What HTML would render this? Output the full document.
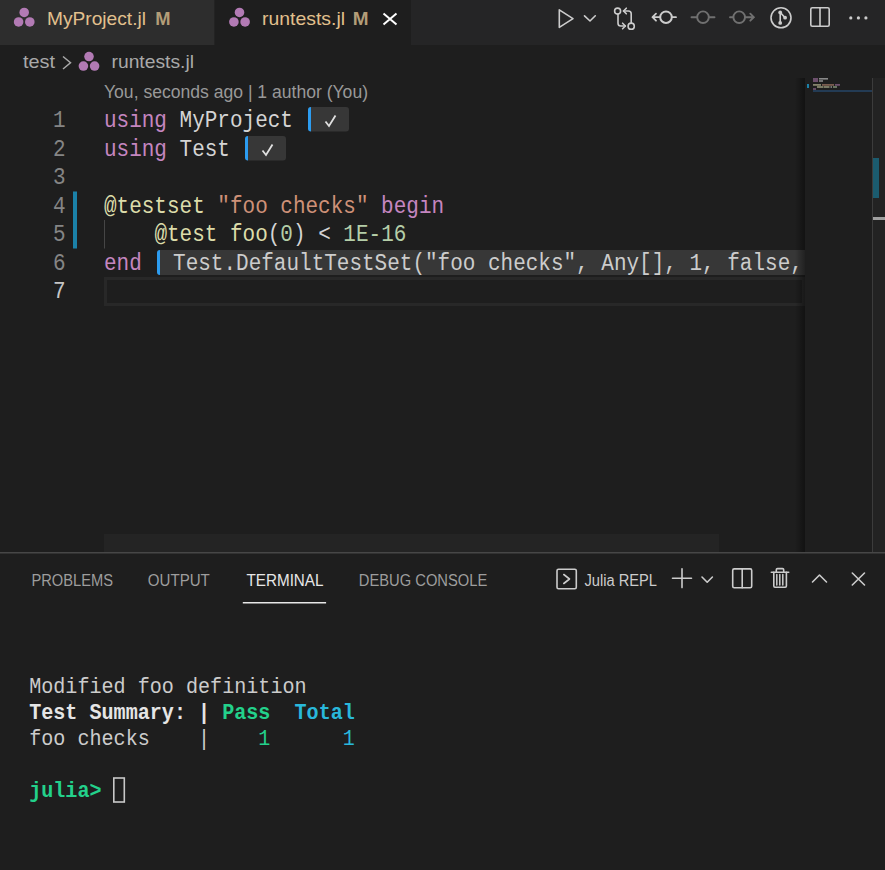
<!DOCTYPE html>
<html><head><meta charset="utf-8">
<style>
html,body{margin:0;padding:0;background:#1e1e1e;width:885px;height:870px;overflow:hidden}
svg{display:block}
.ui{font-family:"Liberation Sans",sans-serif}
.mono{font-family:"Liberation Mono",monospace}
</style></head><body>
<svg width="885" height="870" viewBox="0 0 885 870">
<defs>
  <g id="jl">
    <circle cx="0" cy="-4.75" r="4.8" fill="#b27ab4"/>
    <circle cx="-5.6" cy="4.75" r="4.8" fill="#b27ab4"/>
    <circle cx="5.6" cy="4.75" r="4.8" fill="#b27ab4"/>
  </g>
  <linearGradient id="mmshadow" x1="0" x2="1" y1="0" y2="0">
    <stop offset="0" stop-color="#000" stop-opacity="0"/>
    <stop offset="1" stop-color="#000" stop-opacity="0.4"/>
  </linearGradient>
</defs>
<rect x="0" y="0" width="885" height="870" fill="#1e1e1e"/>


<rect x="0" y="0" width="885" height="45" fill="#252526"/>
<rect x="0" y="0" width="214.5" height="45" fill="#2d2d2d"/>
<rect x="214.5" y="0" width="196.5" height="45" fill="#1e1e1e"/>
<use href="#jl" x="24.2" y="17.2"/>
<text class="ui" x="47" y="25.3" font-size="19" fill="#e2c08d" textLength="99" lengthAdjust="spacingAndGlyphs">MyProject.jl</text>
<text class="ui" x="155.3" y="25.3" font-size="18.5" font-weight="700" fill="#b39d78" textLength="15.3" lengthAdjust="spacingAndGlyphs">M</text>
<use href="#jl" x="239.5" y="17.2"/>
<text class="ui" x="262" y="25.3" font-size="19" fill="#e2c08d" textLength="83" lengthAdjust="spacingAndGlyphs">runtests.jl</text>
<text class="ui" x="352.8" y="25.3" font-size="18.5" font-weight="700" fill="#b39d78" textLength="15.8" lengthAdjust="spacingAndGlyphs">M</text>
<path d="M383.5 13.5 L396.5 24.5 M396.5 13.5 L383.5 24.5" stroke="#ffffff" stroke-width="2" fill="none"/>


<g fill="none" stroke="#cccccc" stroke-width="1.6" stroke-linejoin="round" stroke-linecap="round">
  <path d="M559.3 9.8 L573 18.6 L559.3 27.4 Z"/>
  <path d="M584.5 15.8 L590 21 L595.3 15.8"/>
  <circle cx="617.6" cy="11.1" r="3"/>
  <circle cx="631.2" cy="26.2" r="3.1"/>
  <path d="M618 14.1 V23.2 a2.8 2.8 0 0 0 2.8 2.8 H625.3"/>
  <path d="M622.6 23.2 L625.4 26 L622.6 28.8"/>
  <path d="M631.2 23.1 V13.8 a2.8 2.8 0 0 0 -2.8 -2.8 H623.5"/>
  <path d="M626.3 8.2 L623.5 11 L626.3 13.8"/>
  <circle cx="666" cy="17.2" r="5.8" stroke-width="2"/>
  <path d="M671.8 17.2 H676 M660.2 17.2 H652.5 M656 13.7 L652.5 17.2 L656 20.7" stroke-width="1.8"/>
</g>
<g fill="none" stroke="#707070" stroke-width="1.9" stroke-linecap="round">
  <circle cx="703" cy="17.2" r="5.8"/>
  <path d="M691.5 17.2 H697 M709 17.2 H714.5"/>
  <circle cx="739.2" cy="17.2" r="5.8"/>
  <path d="M730 17.2 H733.2 M745.2 17.2 H753.8 M750.3 13.7 L753.8 17.2 L750.3 20.7"/>
</g>
<g fill="none" stroke="#cccccc" stroke-width="1.6" stroke-linecap="round">
  <circle cx="781" cy="17.8" r="10"/>
  <path d="M780.2 12.4 V22.9 M780.2 12.4 L785.1 17.7"/>
  <rect x="810.8" y="7.8" width="18.4" height="18.4" rx="1.5"/>
  <path d="M820 7.8 V26.2"/>
</g>
<g fill="#cccccc">
  <circle cx="780.2" cy="12.4" r="1.9"/>
  <circle cx="785.1" cy="17.7" r="1.9"/>
  <circle cx="780.2" cy="22.9" r="1.9"/>
  <circle cx="850.8" cy="17.9" r="1.6"/>
  <circle cx="858.4" cy="17.9" r="1.6"/>
  <circle cx="865.9" cy="17.9" r="1.6"/>
</g>


<text class="ui" x="23" y="68.4" font-size="19" fill="#a9a9a9" textLength="32" lengthAdjust="spacingAndGlyphs">test</text>
<path d="M63 56.5 L70.5 62.7 L63 69" stroke="#a9a9a9" stroke-width="1.5" fill="none"/>
<use href="#jl" x="89" y="61.3"/>
<text class="ui" x="111.5" y="68.4" font-size="19" fill="#a9a9a9" textLength="82.5" lengthAdjust="spacingAndGlyphs">runtests.jl</text>
<text class="ui" x="104" y="98.2" font-size="17.5" fill="#999999" textLength="264" lengthAdjust="spacingAndGlyphs">You, seconds ago | 1 author (You)</text>

<text class="mono" x="65.6" y="0" font-size="21" transform="translate(0 127.0) scale(1 1.1)" fill="#858585" text-anchor="end">1</text>
<text class="mono" x="65.6" y="0" font-size="21" transform="translate(0 155.5) scale(1 1.1)" fill="#858585" text-anchor="end">2</text>
<text class="mono" x="65.6" y="0" font-size="21" transform="translate(0 184.0) scale(1 1.1)" fill="#858585" text-anchor="end">3</text>
<text class="mono" x="65.6" y="0" font-size="21" transform="translate(0 212.5) scale(1 1.1)" fill="#858585" text-anchor="end">4</text>
<text class="mono" x="65.6" y="0" font-size="21" transform="translate(0 241.0) scale(1 1.1)" fill="#858585" text-anchor="end">5</text>
<text class="mono" x="65.6" y="0" font-size="21" transform="translate(0 269.5) scale(1 1.1)" fill="#858585" text-anchor="end">6</text>
<text class="mono" x="65.6" y="0" font-size="21" transform="translate(0 298.0) scale(1 1.1)" fill="#c6c6c6" text-anchor="end">7</text>

<rect x="73" y="191.5" width="4" height="57" fill="#1b81a8"/>
<rect x="104" y="220" width="1" height="28.5" fill="#464646"/>
<rect x="105.5" y="278.5" width="698" height="26" fill="none" stroke="#282828" stroke-width="3"/>
<rect x="308" y="107" width="41" height="24.6" rx="3" fill="#373737"/>
<path d="M311 107 a3 3 0 0 0 -3 3 v18.6 a3 3 0 0 0 3 3 z" fill="#2c9cf0"/>
<path d="M325.5 121.5 L329 126 L335.5 115.5" stroke="#e0e0e0" stroke-width="1.8" fill="none"/>
<rect x="245" y="136" width="41" height="24.6" rx="3" fill="#373737"/>
<path d="M248 136 a3 3 0 0 0 -3 3 v18.6 a3 3 0 0 0 3 3 z" fill="#2c9cf0"/>
<path d="M262.5 150.5 L266 155 L272.5 144.5" stroke="#e0e0e0" stroke-width="1.8" fill="none"/>
<rect x="157" y="250" width="660" height="25" rx="3" fill="#373737"/>
<path d="M160 250 a3 3 0 0 0 -3 3 v19 a3 3 0 0 0 3 3 z" fill="#2c9cf0"/>

<text class="mono" x="104" y="0" font-size="21" transform="translate(0 127.0) scale(1 1.1)" ><tspan fill="#c586c0">using</tspan><tspan fill="#d4d4d4">&#160;MyProject</tspan></text>
<text class="mono" x="104" y="0" font-size="21" transform="translate(0 155.5) scale(1 1.1)" ><tspan fill="#c586c0">using</tspan><tspan fill="#d4d4d4">&#160;Test</tspan></text>
<text class="mono" x="104" y="0" font-size="21" transform="translate(0 212.5) scale(1 1.1)" ><tspan fill="#dcdcaa">@testset</tspan><tspan fill="#d4d4d4">&#160;</tspan><tspan fill="#ce9178">"foo&#160;checks"</tspan><tspan fill="#d4d4d4">&#160;</tspan><tspan fill="#c586c0">begin</tspan></text>
<text class="mono" x="104" y="0" font-size="21" transform="translate(0 241.0) scale(1 1.1)" ><tspan fill="#d4d4d4">&#160;&#160;&#160;&#160;</tspan><tspan fill="#dcdcaa">@test&#160;foo</tspan><tspan fill="#d4d4d4">(</tspan><tspan fill="#b5cea8">0</tspan><tspan fill="#d4d4d4">)&#160;&lt;&#160;</tspan><tspan fill="#b5cea8">1E-16</tspan></text>
<text class="mono" x="104" y="0" font-size="21" transform="translate(0 269.5) scale(1 1.1)" ><tspan fill="#c586c0">end</tspan></text>
<text class="mono" x="160.5" y="0" font-size="21" transform="translate(0 269.5) scale(1 1.1)" ><tspan fill="#cccccc">&#160;Test.DefaultTestSet("foo&#160;checks",&#160;Any[],&#160;1,&#160;false,&#160;nothing)</tspan></text>

<rect x="805" y="45" width="80" height="507" fill="#1e1e1e"/>
<rect x="795" y="78" width="10" height="474" fill="url(#mmshadow)"/>
<rect x="872" y="78" width="1" height="474" fill="#3c3c3c"/>
<rect x="873" y="78" width="12" height="474" fill="#232323"/>
<rect x="873" y="158" width="6" height="40" fill="#1b5b6e"/>
<rect x="873" y="217" width="12" height="3" fill="#a0a0a0"/>
<rect x="807" y="84" width="2" height="4" fill="#1b81a8"/>
<g opacity="0.6">
<rect x="813" y="78" width="5" height="4" fill="#a070a0"/>
<rect x="819" y="78" width="9" height="1.6" fill="#d0d0d0"/>
<rect x="819" y="80.2" width="4" height="1.6" fill="#d0d0d0"/>
<rect x="813" y="84" width="8" height="1.8" fill="#c8c8a0"/>
<rect x="822" y="84" width="12" height="1.8" fill="#b88870"/>
<rect x="835" y="84" width="5" height="1.8" fill="#a070a0"/>
<rect x="817" y="86.1" width="6" height="1.8" fill="#c8c8a0"/>
<rect x="823.5" y="86.1" width="6" height="1.8" fill="#c8c8a0"/>
<rect x="830.5" y="86.1" width="1.5" height="1.8" fill="#c0c0c0"/>
<rect x="833" y="86.1" width="4" height="1.8" fill="#a8c098"/>
<rect x="813" y="88.1" width="3" height="1.8" fill="#a070a0"/>
</g>
<rect x="813" y="90" width="59" height="2" fill="#233b54"/>
<rect x="104" y="534" width="615" height="18" fill="#242424"/>
<rect x="0" y="552" width="885" height="1.5" fill="#474747"/>


<text class="ui" x="31.5" y="585.5" font-size="16" fill="#9d9d9d" textLength="81.5" lengthAdjust="spacingAndGlyphs">PROBLEMS</text>
<text class="ui" x="147.8" y="585.5" font-size="16" fill="#9d9d9d" textLength="62" lengthAdjust="spacingAndGlyphs">OUTPUT</text>
<text class="ui" x="246.5" y="585.5" font-size="16" fill="#e7e7e7" textLength="77" lengthAdjust="spacingAndGlyphs">TERMINAL</text>
<rect x="242.8" y="602" width="83.3" height="1.5" fill="#e7e7e7"/>
<text class="ui" x="358.8" y="585.5" font-size="16" fill="#9d9d9d" textLength="128.5" lengthAdjust="spacingAndGlyphs">DEBUG CONSOLE</text>

<g fill="none" stroke="#cccccc" stroke-width="1.6" stroke-linecap="round" stroke-linejoin="round">
  <rect x="557" y="569.3" width="19.3" height="19.4" rx="1.5"/>
  <path d="M563.8 574.5 L569.5 579 L563.8 583.5"/>
  <path d="M672.5 578.2 H691.5 M682 568.8 V587.6"/>
  <path d="M702 577 L707.2 582.2 L712.4 577"/>
  <rect x="732.7" y="568.9" width="19" height="18.8" rx="1.5"/>
  <path d="M742.2 568.9 V587.7"/>
  <path d="M776.3 572 V569.8 a1.2 1.2 0 0 1 1.2 -1.2 H782.5 a1.2 1.2 0 0 1 1.2 1.2 V572"/>
  <path d="M771.3 572.2 H788.7"/>
  <path d="M773.8 572.2 V586 a1.2 1.2 0 0 0 1.2 1.2 H785.2 a1.2 1.2 0 0 0 1.2 -1.2 V572.2"/>
  <path d="M776.8 574.5 V585 M779.8 574.5 V585 M782.8 574.5 V585" stroke-width="1.5"/>
  <path d="M812.5 582 L819.5 575 L826.5 582"/>
  <path d="M852.3 573 L864.5 585 M864.5 573 L852.3 585"/>
</g>
<text class="ui" x="584.5" y="585.8" font-size="16" fill="#cccccc" textLength="72.5" lengthAdjust="spacingAndGlyphs">Julia REPL</text>

<text class="mono" x="29.2" y="0" font-size="20.12" transform="translate(0 693.4) scale(1 1.1)" ><tspan fill="#cccccc">Modified&#160;foo&#160;definition</tspan></text>
<text class="mono" x="29.2" y="0" font-size="20.12" transform="translate(0 719.4) scale(1 1.1)" ><tspan fill="#e5e5e5" font-weight="bold">Test&#160;Summary:&#160;|&#160;</tspan><tspan fill="#23d18b" font-weight="bold">Pass</tspan><tspan fill="#e5e5e5" font-weight="bold">&#160;&#160;</tspan><tspan fill="#29b8db" font-weight="bold">Total</tspan></text>
<text class="mono" x="29.2" y="0" font-size="20.12" transform="translate(0 745.4) scale(1 1.1)" ><tspan fill="#cccccc">foo&#160;checks&#160;&#160;&#160;&#160;|&#160;&#160;&#160;&#160;</tspan><tspan fill="#23d18b">1</tspan><tspan fill="#cccccc">&#160;&#160;&#160;&#160;&#160;&#160;</tspan><tspan fill="#29b8db">1</tspan></text>
<text class="mono" x="29.2" y="0" font-size="20.12" transform="translate(0 797.4) scale(1 1.1)" ><tspan fill="#23d18b" font-weight="bold">julia&gt;</tspan></text>
<rect x="113.8" y="778" width="10.5" height="24" fill="none" stroke="#c8c8c8" stroke-width="1.6"/>
</svg>
</body></html>
